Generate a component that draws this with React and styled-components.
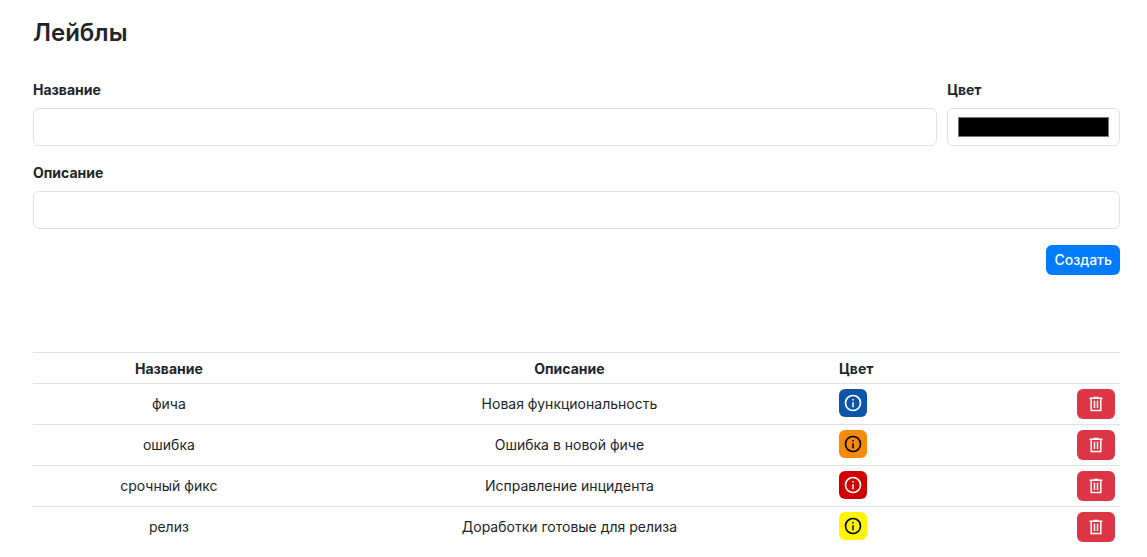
import { useState } from "react";
import styled, { createGlobalStyle } from "styled-components";

const GlobalStyle = createGlobalStyle`
  *, *::before, *::after {
    box-sizing: border-box;
  }
  body {
    margin: 0;
    background: #fff;
    color: #212529;
    font-family: Inter, "Liberation Sans", sans-serif;
    font-size: 14px;
    line-height: 21px;
  }
`;

const Page = styled.main`
  padding: 17px 27px 0 33px;
`;

const Title = styled.h1`
  margin: 0;
  font-size: 24px;
  line-height: 32px;
  font-weight: 600;
`;

const Form = styled.form`
  display: grid;
  grid-template-columns: repeat(12, 1fr);
  column-gap: 10px;
  row-gap: 16px;
  margin-top: 30px;
`;

const Field = styled.div`
  grid-column: span ${({ $span }) => $span};
  display: flex;
  flex-direction: column;
  gap: 8px;
  min-width: 0;
`;

const Label = styled.label`
  font-weight: 700;
`;

const Input = styled.input`
  width: 100%;
  height: 38px;
  padding: 8px 10px;
  border: 1px solid #dee2e6;
  border-radius: 6px;
  background: #fff;
  color: inherit;
  font: inherit;
  &::-webkit-color-swatch-wrapper {
    padding: 0;
  }
  &::-webkit-color-swatch {
    border: 1px solid #777;
    border-radius: 0;
  }
`;

const Actions = styled.div`
  grid-column: 1 / -1;
  display: flex;
  justify-content: flex-end;
`;

const Button = styled.button`
  display: inline-flex;
  align-items: center;
  justify-content: center;
  height: 30px;
  padding: 0 8px;
  border: 0;
  border-radius: 6px;
  background: ${({ $danger }) => ($danger ? "#dc3545" : "#007bff")};
  color: #fff;
  font: inherit;
  font-weight: 500;
  line-height: 20px;
  cursor: pointer;
`;

const Table = styled.table`
  width: 100%;
  margin-top: 77px;
  border-collapse: separate;
  border-spacing: 0;
  table-layout: fixed;
`;

const Cell = styled.td`
  width: ${({ $width }) => $width};
  padding: 5px;
  border-top: 1px solid #dee2e6;
  line-height: 20px;
  text-align: ${({ $align }) => $align || "center"};
  vertical-align: middle;
`;

const HeadCell = styled(Cell)`
  padding: 6px 5px 4px;
  font-weight: 700;
`;

const BadgeCell = styled(Cell)`
  vertical-align: top;
`;

const Badge = styled.span`
  display: flex;
  align-items: center;
  justify-content: center;
  width: 28px;
  height: 28px;
  border-radius: 6px;
  background: ${({ $bg }) => $bg};
  color: ${({ $color }) => $color};
`;

const DeleteButton = styled(Button)`
  width: 38px;
  vertical-align: top;
`;

const InfoIcon = () => (
  <svg width="20" height="20" viewBox="0 0 24 24" fill="none" aria-hidden="true">
    <circle cx="12" cy="12" r="9" stroke="currentColor" strokeWidth="2" />
    <path d="M11.1 7.1h1.8v1.9h-1.8zM11.1 11h1.8v6h-1.8z" fill="currentColor" />
  </svg>
);

const TrashIcon = () => (
  <svg width="20" height="20" viewBox="0 0 20 20" fill="none" stroke="currentColor" strokeWidth="1.5" aria-hidden="true">
    <path d="M3.6 4.3h12.8M7.5 3.4h5M5.2 4.3v12.3h9.6V4.3M8.5 6.8v7.3M11.5 6.8v7.3" />
  </svg>
);

const initialLabels = [
  { id: 1, name: "фича", description: "Новая функциональность", bg: "#0d55a9", color: "#fff" },
  { id: 2, name: "ошибка", description: "Ошибка в новой фиче", bg: "#f78a08", color: "#000" },
  { id: 3, name: "срочный фикс", description: "Исправление инцидента", bg: "#d00000", color: "#fff" },
  { id: 4, name: "релиз", description: "Доработки готовые для релиза", bg: "#fff500", color: "#000" },
];

const App = () => {
  const [labels, setLabels] = useState(initialLabels);

  const handleSubmit = (e) => {
    e.preventDefault();
    const data = new FormData(e.currentTarget);
    const label = { id: Date.now(), name: data.get("name"), description: data.get("description"), bg: data.get("color"), color: "#fff" };
    setLabels([...labels, label]);
    e.currentTarget.reset();
  };

  return (
    <>
      <GlobalStyle />
      <Page>
        <Title>Лейблы</Title>
        <Form onSubmit={handleSubmit}>
          <Field $span={10}>
            <Label htmlFor="name">Название</Label>
            <Input id="name" name="name" type="text" />
          </Field>
          <Field $span={2}>
            <Label htmlFor="color">Цвет</Label>
            <Input id="color" name="color" type="color" defaultValue="#000000" />
          </Field>
          <Field $span={12}>
            <Label htmlFor="description">Описание</Label>
            <Input id="description" name="description" type="text" />
          </Field>
          <Actions>
            <Button type="submit">Создать</Button>
          </Actions>
        </Form>
        <Table>
          <thead>
            <tr>
              <HeadCell as="th" scope="col" $width="25%">Название</HeadCell>
              <HeadCell as="th" scope="col" $width="48.7%">Описание</HeadCell>
              <HeadCell as="th" scope="col" $align="left">Цвет</HeadCell>
              <HeadCell />
            </tr>
          </thead>
          <tbody>
            {labels.map((label) => (
              <tr key={label.id}>
                <Cell>{label.name}</Cell>
                <Cell>{label.description}</Cell>
                <BadgeCell $align="left">
                  <Badge $bg={label.bg} $color={label.color}>
                    <InfoIcon />
                  </Badge>
                </BadgeCell>
                <Cell $align="right">
                  <DeleteButton
                    $danger
                    type="button"
                    aria-label="Удалить"
                    onClick={() => setLabels(labels.filter(({ id }) => id !== label.id))}
                  >
                    <TrashIcon />
                  </DeleteButton>
                </Cell>
              </tr>
            ))}
          </tbody>
        </Table>
      </Page>
    </>
  );
};

export default App;
